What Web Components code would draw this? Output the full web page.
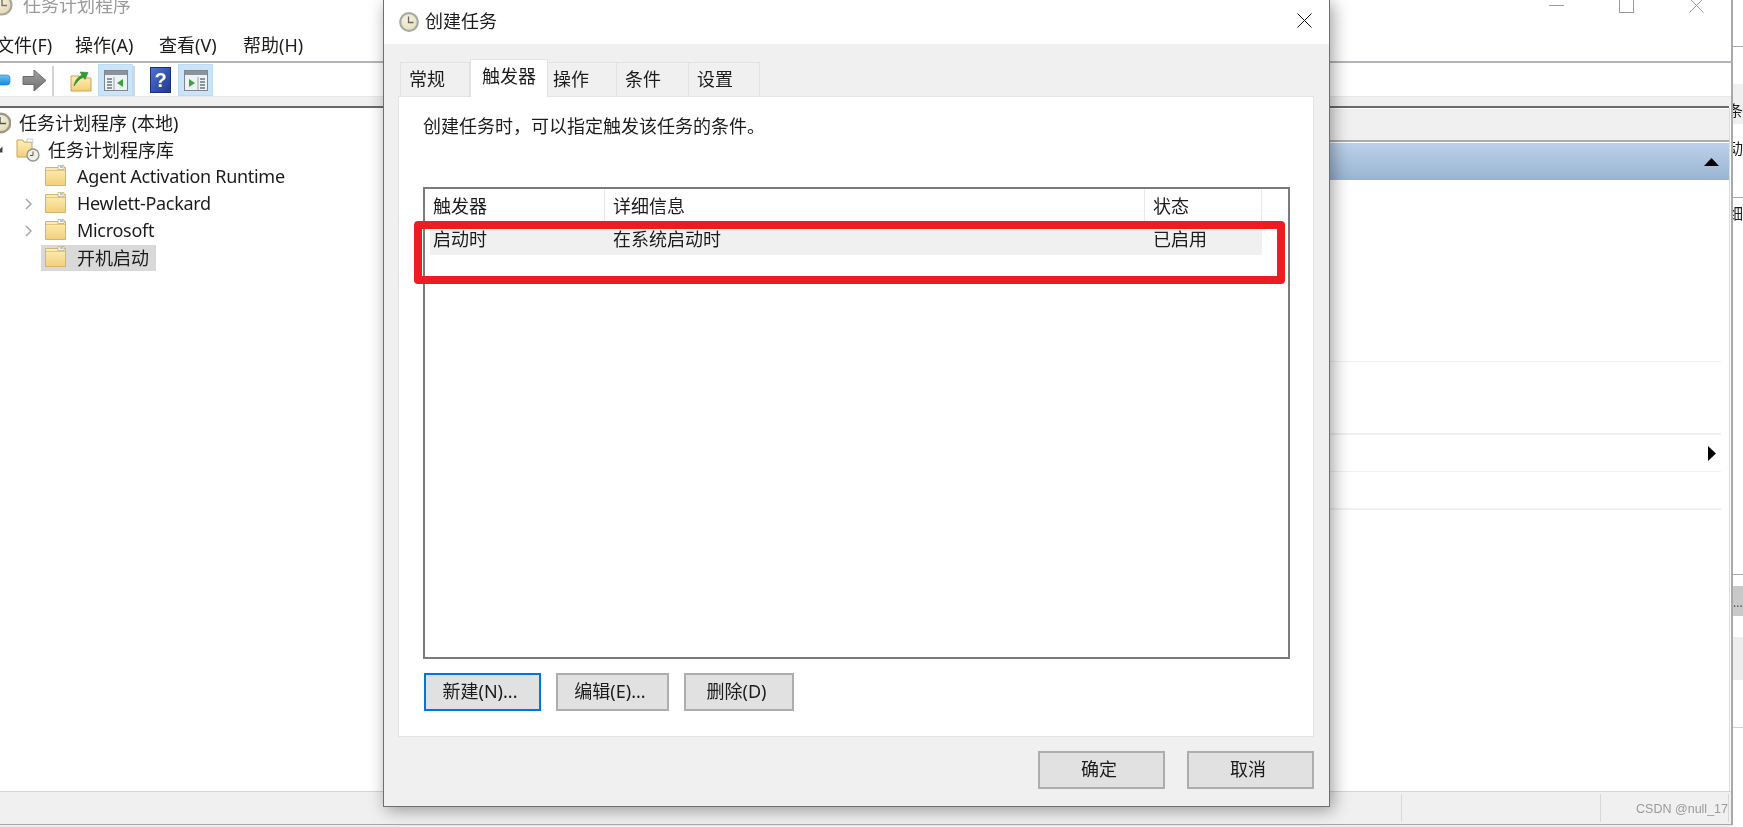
<!DOCTYPE html>
<html lang="zh-CN">
<head>
<meta charset="utf-8">
<title>任务计划程序</title>
<style>
  html, body { margin: 0; height: 100%; background: #fff; overflow: hidden; }
  body { position: relative; font: 18px/24px "Noto Sans", "Noto Sans CJK SC", sans-serif; color: #1c1c1c; filter: blur(.35px); }
</style>
</head>
<body>

<svg width="0" height="0" style="position:absolute">
  <defs>
    <linearGradient id="fold" x1="0" y1="0" x2="0" y2="1"><stop offset="0" stop-color="#fff0b8"/><stop offset="1" stop-color="#f3cf7c"/></linearGradient>
    <radialGradient id="ring" cx=".4" cy=".35" r=".75"><stop offset="0" stop-color="#f8f3dc"/><stop offset="1" stop-color="#e0d6ae"/></radialGradient>
    <linearGradient id="help" x1="0" y1="0" x2="1" y2="1"><stop offset="0" stop-color="#4f74d2"/><stop offset="1" stop-color="#1f3a8c"/></linearGradient>
    <linearGradient id="blue" x1="0" y1="0" x2="0" y2="1"><stop offset="0" stop-color="#6cc4f5"/><stop offset="1" stop-color="#0f8ae0"/></linearGradient>
    <linearGradient id="steel" x1="0" y1="0" x2="0" y2="1"><stop offset="0" stop-color="#a2a2a2"/><stop offset="1" stop-color="#6f6f6f"/></linearGradient>
  </defs>
</svg>

<template id="side-tpl">
  <style>
    :host { display: block; position: absolute; left: 1733px; top: 0; width: 10px; height: 827px; overflow: hidden; background: #fff; font-size: 15px; }
    .txt { margin-left: -5px; white-space: nowrap; line-height: 24px; }
    .line { height: 1px; background: #a8a8a8; }
  </style>
  <div style="height:46px"></div>
  <div class="line"></div>
  <div style="height:37px"></div>
  <div style="height:14px;background:#f0f0f0"></div>
  <div class="txt" style="height:26px;background:#f0f0f0">条</div>
  <div style="height:12px"></div>
  <div class="txt">动</div>
  <div style="height:25px"></div>
  <div class="line" style="margin-top:12px"></div>
  <div style="height:3px"></div>
  <div class="txt">细</div>
  <div style="height:349px"></div>
  <div class="line"></div>
  <div style="height:11px"></div>
  <div style="height:30px;background:#c9c9c9;line-height:34px;font-size:12px;color:#555">...</div>
  <div style="height:21px"></div>
  <div style="height:43px;background:#eee"></div>
  <div style="height:47px"></div>
  <div class="line" style="background:#d0d0d0"></div>
</template>

<template id="window-tpl">
  <style>
    :host { display: flex; flex-direction: column; position: absolute; left: -24px; top: -18px; width: 1757px; height: 843px; box-sizing: border-box; background: #fff; border-right: 2px solid #a9a9a9; border-bottom: 1px solid #a9a9a9; box-shadow: 2px 0 5px rgba(0,0,0,.18); }
    .title { height: 46px; flex: none; display: flex; align-items: center; padding: 0 27px 0 15px; color: #9a9a9a; }
    .title span { margin: 0 0 0 10px; font-size: 18px; flex: 1; }
    .ctl { display: flex; align-items: center; gap: 55px; }
    .menu { height: 33px; flex: none; display: flex; align-items: center; padding-left: 20px; gap: 24px; border-bottom: 2px solid #b4b4ba; }
    .band { height: 10px; flex: none; background: #f0f0f0; border-top: 1px solid #e8e8e8; box-sizing: border-box; }
    .dark { height: 2px; flex: none; background: #6a6a6a; margin-right: 2px; }
    .main { flex: 1; display: flex; min-height: 0; }
    .left { flex: 1; padding-top: 1px; }
  </style>
  <div class="title">
    <svg width="22" height="22" viewBox="0 0 22 22">
      <defs><radialGradient id="ring" cx=".4" cy=".35" r=".75"><stop offset="0" stop-color="#f8f3dc"/><stop offset="1" stop-color="#e0d6ae"/></radialGradient></defs>
      <circle cx="11" cy="11" r="9.500" fill="url(#ring)" stroke="#a8a89c" stroke-width="2.200"/><path d="M11 5v6.500h5" fill="none" stroke="#777" stroke-width="1.500"/>
    </svg>
    <span>任务计划程序</span>
    <div class="ctl">
      <svg width="15" height="15" viewBox="0 0 15 15"><path d="M0 7.500h15" stroke="#9a9a9a"/></svg>
      <svg width="15" height="15" viewBox="0 0 15 15"><rect x=".5" y=".5" width="14" height="14" fill="none" stroke="#9a9a9a"/></svg>
      <svg width="15" height="15" viewBox="0 0 15 15"><path d="M.5.5l14 14M14.500.5l-14 14" stroke="#9a9a9a"/></svg>
    </div>
  </div>
  <div class="menu"><slot name="menu"></slot></div>
  <slot name="toolbar"></slot>
  <div class="band"></div>
  <div class="dark"></div>
  <div class="main">
    <div class="left"><slot name="tree"></slot></div>
    <slot name="actions"></slot>
  </div>
  <slot name="status"></slot>
</template>

<template id="toolbar-tpl">
  <style>
    :host { display: flex; height: 33px; flex: none; align-items: stretch; }
    ::slotted(tool-btn) { margin: 1px 0 0; }
  </style>
  <slot></slot>
</template>

<template id="tool-tpl">
  <style>
    :host { display: flex; width: 35px; align-items: center; justify-content: center; box-sizing: border-box; }
    :host([active]) { background: #cce4f7; border: 1px solid #bcdcf4; }
    :host([sep]) { width: 2px; background: #d6d6d6; margin: 3px 0 0 !important; }
  </style>
  <slot></slot>
</template>

<template id="tree-tpl">
  <style>
    :host { display: flex; height: 27px; align-items: center; white-space: nowrap; }
    .tw { flex: none; display: flex; justify-content: flex-end; padding-right: 9px; box-sizing: border-box; height: 100%; align-items: center; }
    .item { display: flex; align-items: center; gap: 8px; height: 26px; padding: 0 7px 0 4px; }
    :host([level="2"]) .item { gap: 11px; }
    :host([selected]) .item { background: #d9d9d9; }
    :host([latin]) { letter-spacing: -.3px; }
    :host([latin]) span { position: relative; top: -1px; }
    svg { flex: none; display: block; }
  </style>
  <div class="tw"></div>
  <div class="item"><slot name="icon"></slot><span><slot></slot></span></div>
</template>

<template id="actions-tpl">
  <style>
    :host { display: flex; flex-direction: column; width: 500px; flex: none; border-right: 1px solid #dcdcdc; margin-right: 1px; }
    .head { height: 31px; background: #f0f0f0; margin-top: 1px; border-bottom: 2px solid #ababab; }
    .blue { height: 37px; margin-top: 1px; background: linear-gradient(#bcd1e9, #99b4d2); display: flex; align-items: center; justify-content: flex-end; padding-right: 10px; }
    .rows { flex: 1; padding-right: 8px; }
    .r { border-bottom: 1px solid #f0f0f0; box-sizing: border-box; display: flex; align-items: center; justify-content: flex-end; }
  </style>
  <div class="head"></div>
  <div class="blue"><svg width="15" height="8" viewBox="0 0 15 8"><path d="M7.500 0L15 8H0z" fill="#000"/></svg></div>
  <div class="rows">
    <div class="r" style="height:182px"></div>
    <div class="r" style="height:73px;border-bottom-width:2px"></div>
    <div class="r" style="height:37px"><svg style="margin-right:5px" width="8" height="15" viewBox="0 0 8 15"><path d="M0 0l8 7.500L0 15z" fill="#000"/></svg></div>
    <div class="r" style="height:38px;border-bottom-width:2px"></div>
  </div>
</template>

<template id="status-tpl">
  <style>
    :host { display: flex; height: 33px; flex: none; background: #f0f0f0; border-top: 1px solid #d4d4d4; box-sizing: border-box; }
    .a { flex: 1; }
    .b { width: 198px; border-left: 1px solid #d8d8d8; margin: 2px 0; }
    .c { width: 127px; border-left: 1px solid #d8d8d8; border-right: 1px solid #d8d8d8; margin: 2px 2px 2px 0; display: flex; justify-content: flex-end; align-items: center; }
    span { font: 12.5px "Liberation Sans", sans-serif; color: #9a9a9a; white-space: nowrap; position: relative; top: 1px; }
  </style>
  <div class="a"></div><div class="b"></div>
  <div class="c"><span><slot></slot></span></div>
</template>

<template id="dialog-tpl">
  <style>
    :host { display: flex; flex-direction: column; position: absolute; left: 383px; top: 0; width: 947px; height: 807px; box-sizing: border-box; background: #f0f0f0; border: 1px solid #6e6e6e; border-top: 0; box-shadow: 3px 3px 16px rgba(0,0,0,.38); }
    .cap { height: 44px; flex: none; background: #fff; display: flex; align-items: center; padding: 0 17px 0 15px; gap: 6px; }
    .cap span { flex: 1; position: relative; top: -1px; }
    .body { flex: 1; display: flex; flex-direction: column; padding: 15px 15px 0 14px; min-height: 0; }
    .tabs { display: flex; flex: none; height: 37px; padding-left: 2px; align-items: flex-end; position: relative; z-index: 1; }
    .page { height: 641px; flex: none; box-sizing: border-box; background: #fff; border: 1px solid #e4e4e4; padding: 17px 23px 0 24px; display: flex; flex-direction: column; }
    .hint { height: 24px; flex: none; white-space: nowrap; }
    .list { margin-top: 49px; height: 472px; flex: none; box-sizing: border-box; border: 2px solid #7b7b7b; position: relative; width: 867px; }
    .btns { display: flex; gap: 15px; margin-top: 14px; flex: none; padding-left: 1px; }
    .foot { flex: 1; display: flex; justify-content: flex-end; gap: 22px; padding-top: 14px; }
    .mark { position: absolute; left: -11px; top: 32px; width: 871px; height: 63px; box-sizing: border-box; border: 8px solid #ed1c24; border-radius: 4px; }
    svg { display: block; }
    .x { position: relative; top: -2px; }
  </style>
  <div class="cap">
    <svg width="20" height="20" viewBox="0 0 20 20">
      <defs><radialGradient id="ring" cx=".4" cy=".35" r=".75"><stop offset="0" stop-color="#f8f3dc"/><stop offset="1" stop-color="#e6dcb4"/></radialGradient></defs>
      <circle cx="10" cy="10" r="8.800" fill="url(#ring)" stroke="#a4aca8" stroke-width="2.200"/><path d="M9.500 4.500v6h5" fill="none" stroke="#666" stroke-width="1.300"/>
    </svg>
    <span>创建任务</span>
    <svg class="x" width="15" height="15" viewBox="0 0 15 15"><path d="M.5.5l14 14M14.500.5l-14 14" stroke="#111"/></svg>
  </div>
  <div class="body">
    <div class="tabs"><slot name="tabs"></slot></div>
    <div class="page">
      <div class="hint"><slot name="hint"></slot></div>
      <div class="list"><slot name="rows"></slot><div class="mark"></div></div>
      <div class="btns"><slot name="btns"></slot></div>
    </div>
    <div class="foot"><slot name="foot"></slot></div>
  </div>
</template>

<template id="tab-tpl">
  <style>
    :host { display: flex; box-sizing: border-box; height: 34px; align-items: center; padding: 0 0 2px 8px; background: #f0f0f0; border: 1px solid #e2e2e2; border-bottom: 0; border-left-width: 0; }
    :host(:first-child) { border-left-width: 1px; }
    :host([active]) { height: 38px; background: #fff; margin-bottom: -1px; justify-content: center; padding: 0 0 6px; border-left-width: 1px; position: relative; }
  </style>
  <slot></slot>
</template>

<template id="row-tpl">
  <style>
    :host { display: grid; grid-template-columns: 180px 540px 117px; height: 33px; align-items: center; white-space: nowrap; }
    ::slotted(span) { padding-left: 8px; height: 33px; line-height: 34px; border-right: 1px solid #e8e8e8; }
    :host([body]) { margin: 8px 0 0 5px; height: 25px; grid-template-columns: 175px 540px 117px; background: #f0f0f0; width: 832px; }
    :host([body]) ::slotted(span) { padding-left: 3px; border: 0; height: 25px; line-height: 19px; }
    :host([body]) ::slotted(span:nth-child(n+2)) { padding-left: 8px; }
  </style>
  <slot></slot>
</template>

<template id="btn-tpl">
  <style>
    :host { display: flex; box-sizing: border-box; height: 38px; align-items: center; justify-content: center; background: #e1e1e1; border: 2px solid #adadad; white-space: nowrap; padding: 0 5px 2px 0; }
    :host([focus]) { border-color: #0078d7; }
  </style>
  <slot></slot>
</template>

<task-window>
  <menu-item slot="menu" style="width:55px">文件(F)</menu-item>
  <menu-item slot="menu">操作(A)</menu-item>
  <menu-item slot="menu">查看(V)</menu-item>
  <menu-item slot="menu">帮助(H)</menu-item>

  <tool-bar slot="toolbar">
    <tool-btn><svg width="35" height="12" viewBox="0 0 35 12"><rect x="-4" y="1" width="38" height="10" rx="3" fill="url(#blue)" stroke="#1877c4" stroke-width=".6"/></svg></tool-btn>
    <tool-btn style="margin-left:6px"><svg width="25" height="23" viewBox="0 0 25 23"><path d="M1 7.500h11V1l12 10.500L12 22v-6.500H1z" fill="url(#steel)" stroke="#6c6c6c"/></svg></tool-btn>
    <tool-btn sep></tool-btn>
    <tool-btn style="margin-left:9px"><svg width="22" height="24" viewBox="0 0 22 24"><path d="M1 8h8l2 2h10v13H1z" fill="url(#fold)" stroke="#c8a45a"/><path d="M4 18c1-6 4-9 8-11l-2-3 8 .5-3 7-1.500-2.500c-3 1-6 4-9.500 9z" fill="#2f9c2f" stroke="#1f7f1f" stroke-width=".5"/></svg></tool-btn>
    <tool-btn active><svg width="24" height="21" viewBox="0 0 24 21"><rect x=".5" y=".5" width="23" height="20" fill="#eef2f6" stroke="#7d8790"/><rect x="1" y="1" width="22" height="4" fill="#8a949c"/><path d="M3 9h5M3 12h5M3 15h5M3 18h5" stroke="#6b7780" stroke-width="1.300"/><path d="M10 7v13" stroke="#9aa3aa"/><path d="M19 9v8l-6-4z" fill="#3aa535"/></svg></tool-btn>
    <tool-btn sep style="margin-left:1px"></tool-btn>
    <tool-btn style="margin-left:8px"><svg width="21" height="26" viewBox="0 0 21 26"><rect x=".5" y=".5" width="20" height="25" fill="url(#help)" stroke="#1b2f78"/><text x="10.500" y="20" font-family="Liberation Sans" font-size="20" font-weight="700" fill="#fff" text-anchor="middle">?</text></svg></tool-btn>
    <tool-btn active><svg width="24" height="21" viewBox="0 0 24 21"><rect x=".5" y=".5" width="23" height="20" fill="#eef2f6" stroke="#7d8790"/><rect x="1" y="1" width="22" height="4" fill="#8a949c"/><path d="M16 9h5M16 12h5M16 15h5M16 18h5" stroke="#6b7780" stroke-width="1.300"/><path d="M14 7v13" stroke="#9aa3aa"/><path d="M5 9v8l6-4z" fill="#3aa535"/></svg></tool-btn>
  </tool-bar>

  <tree-row slot="tree" level="0" indent="11">
    <svg slot="icon" width="20" height="24" viewBox="0 0 20 24"><circle cx="10" cy="12" r="9.200" fill="url(#ring)" stroke="#98988c" stroke-width="2.400"/><path d="M9 6v6.500h6" fill="none" stroke="#555" stroke-width="1.500"/></svg>
    任务计划程序 (本地)
  </tree-row>
  <tree-row slot="tree" level="1" indent="36" twisty="open">
    <svg slot="icon" width="24" height="24" viewBox="0 0 24 24"><path d="M1 2h6l1 2h8v15H1z" fill="url(#fold)" stroke="#c8a45a"/><path d="M11 1h6v3h-6z" fill="#fff" stroke="#9fb4c4" stroke-width=".6"/><circle cx="17" cy="17" r="6" fill="#eeeee4" stroke="#8e948e" stroke-width="1.300"/><path d="M17 13.500v4h-3" fill="none" stroke="#555"/></svg>
    任务计划程序库
  </tree-row>
  <tree-row slot="tree" level="2" indent="65" latin><folder-icon slot="icon"></folder-icon>Agent Activation Runtime</tree-row>
  <tree-row slot="tree" level="2" indent="65" twisty="closed" latin><folder-icon slot="icon"></folder-icon>Hewlett-Packard</tree-row>
  <tree-row slot="tree" level="2" indent="65" twisty="closed" latin><folder-icon slot="icon"></folder-icon>Microsoft</tree-row>
  <tree-row slot="tree" level="2" indent="65" selected><folder-icon slot="icon"></folder-icon>开机启动</tree-row>

  <actions-pane slot="actions"></actions-pane>
  <status-bar slot="status">CSDN @null_17</status-bar>
</task-window>

<side-window></side-window>

<task-dialog>
  <dlg-tab slot="tabs" style="width:70px">常规</dlg-tab>
  <dlg-tab slot="tabs" active style="width:78px">触发器</dlg-tab>
  <dlg-tab slot="tabs" style="width:69px;padding-left:5px">操作</dlg-tab>
  <dlg-tab slot="tabs" style="width:72px">条件</dlg-tab>
  <dlg-tab slot="tabs" style="width:71px">设置</dlg-tab>

  <span slot="hint">创建任务时，可以指定触发该任务的条件。</span>

  <list-row slot="rows"><span>触发器</span><span>详细信息</span><span>状态</span></list-row>
  <list-row slot="rows" body><span>启动时</span><span>在系统启动时</span><span>已启用</span></list-row>

  <dlg-btn slot="btns" focus style="width:117px">新建(N)...</dlg-btn>
  <dlg-btn slot="btns" style="width:113px">编辑(E)...</dlg-btn>
  <dlg-btn slot="btns" style="width:110px">删除(D)</dlg-btn>

  <dlg-btn slot="foot" style="width:127px">确定</dlg-btn>
  <dlg-btn slot="foot" style="width:127px">取消</dlg-btn>
</task-dialog>

<script>
  class TplElement extends HTMLElement {
    constructor() {
      super();
      const tpl = document.getElementById(this.constructor.tpl);
      this.attachShadow({mode: 'open'}).appendChild(tpl.content.cloneNode(true));
    }
  }

  class TaskWindow extends TplElement { static tpl = 'window-tpl'; }
  class SideWindow extends TplElement { static tpl = 'side-tpl'; }
  class ToolBar extends TplElement { static tpl = 'toolbar-tpl'; }
  class ToolBtn extends TplElement { static tpl = 'tool-tpl'; }
  class ActionsPane extends TplElement { static tpl = 'actions-tpl'; }
  class StatusBar extends TplElement { static tpl = 'status-tpl'; }
  class TaskDialog extends TplElement { static tpl = 'dialog-tpl'; }
  class DlgTab extends TplElement { static tpl = 'tab-tpl'; }
  class ListRow extends TplElement { static tpl = 'row-tpl'; }
  class DlgBtn extends TplElement { static tpl = 'btn-tpl'; }

  class MenuItem extends HTMLElement {
    constructor() {
      super();
      this.attachShadow({mode: 'open'}).innerHTML = `<style>:host{display:block;width:60px;white-space:nowrap}</style><slot></slot>`;
    }
  }

  class FolderIcon extends HTMLElement {
    constructor() {
      super();
      this.attachShadow({mode: 'open'}).innerHTML = `
        <style>:host{display:block;width:21px;height:21px;margin-top:-3px}svg{display:block}</style>
        <svg width="21" height="21" viewBox="0 0 21 21">
          <defs><linearGradient id="fold" x1="0" y1="0" x2="0" y2="1"><stop offset="0" stop-color="#fdeeb4"/><stop offset="1" stop-color="#f3cf7c"/></linearGradient></defs>
          <path d="M.5 2.500h20v18H.5z" fill="url(#fold)" stroke="#d4b56e"/>
          <path d="M1 5.500h19" stroke="#e0c583"/>
          <path d="M13 .5h6v4h-6z" fill="#fdf8e6" stroke="#b8a878" stroke-width=".7"/>
          <path d="M15 2h3" stroke="#6f93b5"/>
        </svg>`;
    }
  }

  class TreeRow extends TplElement {
    static tpl = 'tree-tpl';
    connectedCallback() {
      const tw = this.shadowRoot.querySelector('.tw');
      tw.style.width = (this.getAttribute('indent') || 0) + 'px';
      const kind = this.getAttribute('twisty');
      if (kind === 'closed') {
        tw.innerHTML = '<svg width="7" height="12" viewBox="0 0 7 12"><path d="M1 1l5 5-5 5" fill="none" stroke="#a6a6a6" stroke-width="1.500"/></svg>';
      } else if (kind === 'open') {
        tw.innerHTML = '<svg width="7" height="7" viewBox="0 0 7 7"><path d="M6.500 .5v6h-6z" fill="#444"/></svg>';
      }
    }
  }

  customElements.define('task-window', TaskWindow);
  customElements.define('side-window', SideWindow);
  customElements.define('tool-bar', ToolBar);
  customElements.define('tool-btn', ToolBtn);
  customElements.define('actions-pane', ActionsPane);
  customElements.define('status-bar', StatusBar);
  customElements.define('task-dialog', TaskDialog);
  customElements.define('dlg-tab', DlgTab);
  customElements.define('list-row', ListRow);
  customElements.define('dlg-btn', DlgBtn);
  customElements.define('menu-item', MenuItem);
  customElements.define('folder-icon', FolderIcon);
  customElements.define('tree-row', TreeRow);
</script>
</body>
</html>
